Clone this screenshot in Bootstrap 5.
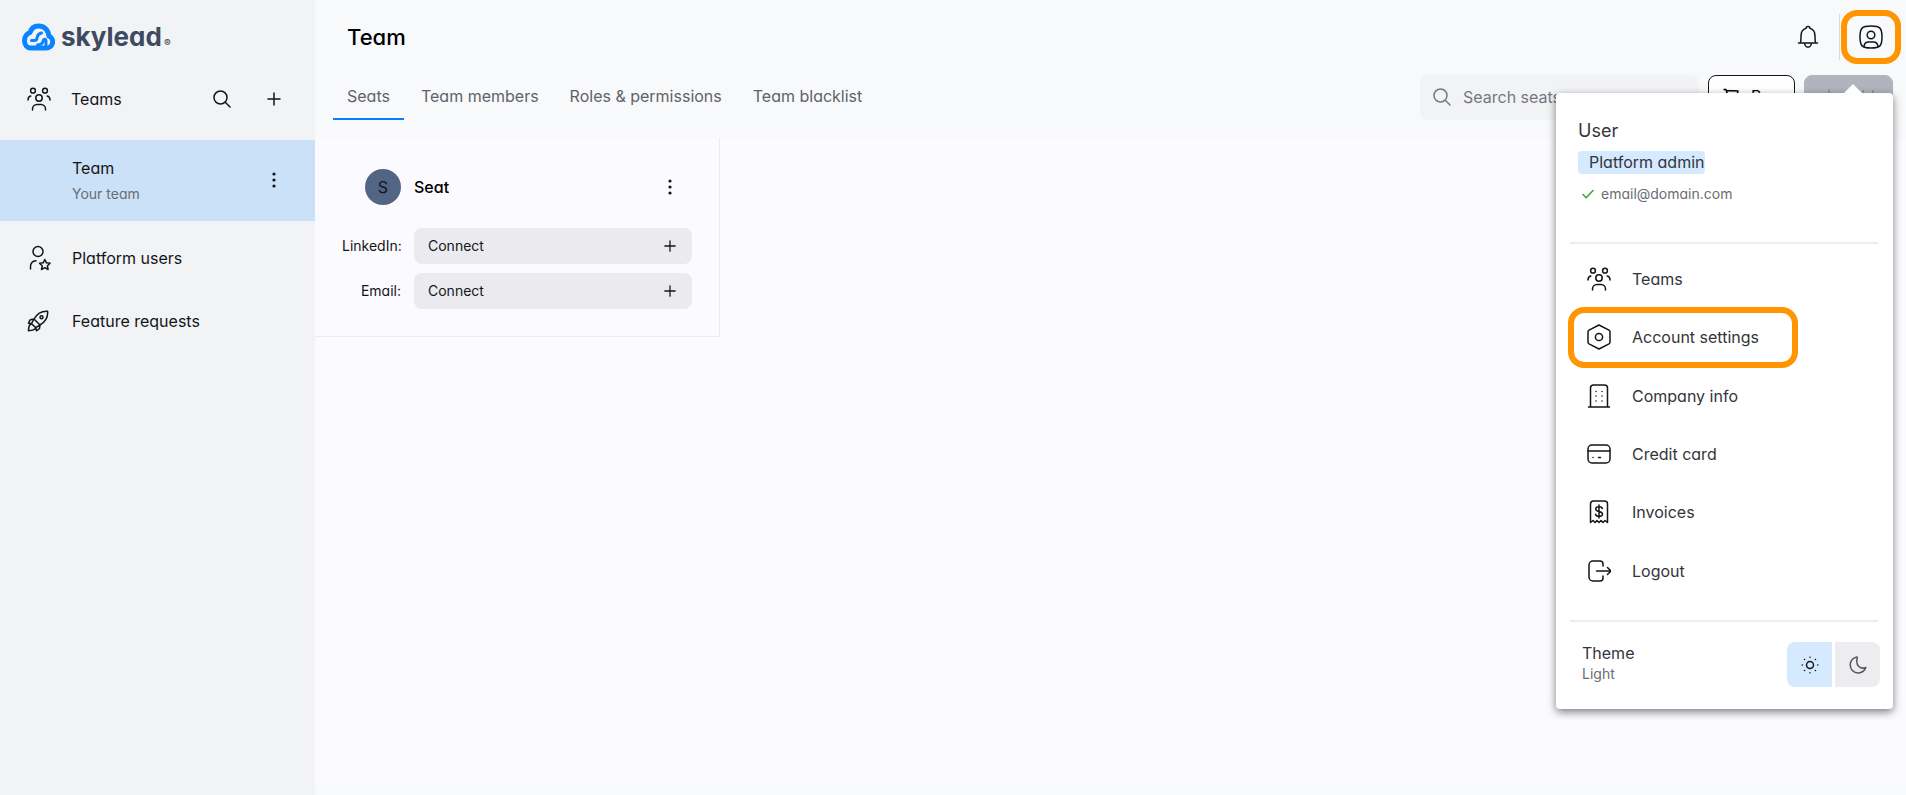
<!DOCTYPE html>
<html lang="en">
<head>
<meta charset="utf-8">
<meta name="viewport" content="width=device-width, initial-scale=1">
<title>Team – Seats</title>
<link href="https://cdn.jsdelivr.net/npm/bootstrap@5.3.0/dist/css/bootstrap.min.css" rel="stylesheet">
<style>
  body { font-family: Inter, "Liberation Sans", sans-serif; font-feature-settings: "cv11"; font-size: 16px; line-height: 24px; color: #14151a; background: #f8f9fb; }
  a { color: inherit; text-decoration: none; }
  svg { display: block; flex: none; fill: none; stroke: currentColor; stroke-width: 1.5; stroke-linecap: round; stroke-linejoin: round; }
  .btn-plain { border: 0; background: none; padding: 0; color: inherit; }
  .note { font-size: 14px; line-height: 20px; color: #6b6d73; }

  .sidebar { flex: 0 0 315px; background: #f2f3f5; }
  .brand { height: 68px; padding: 6px 0 0 22px; gap: 6px; color: #3e4a61; }
  .brand-word { font-size: 26px; font-weight: 700; line-height: 32px; }
  .brand-mark { font-size: 10px; line-height: 12px; font-weight: 600; margin-left: -4px; padding-top: 12px; }
  .brand svg { color: #0a84ff; stroke-width: 5; }
  .side-row { min-height: 63px; padding: 0 0 2px 23px; gap: 17px; }
  .side-icon { width: 32px; }
  .side-head { height: 72px; padding-bottom: 11px; padding-right: 30px; }
  .side-current { height: 81px; background: #cbe1f7; padding: 0 31px 2px 72px; margin-bottom: 6px; }
  .side-search { margin-right: 17px; padding: 0 15px; margin-right: 32px; }
  .side-head .side-search { padding: 0; margin-right: 17px; }
  .side-head .side-search + button { padding: 0 4px; margin-left: 15px; }

  .page-title { font-size: 22px; font-weight: 500; line-height: 28px; color: #000; margin: 0; }
  .topbar { height: 74px; padding-left: 32px; padding-right: 23px; }
  .topbar-line { width: 1px; height: 46px; background: #d9dade; margin: 0 19px 0 20px; }
  .toolbar { height: 64px; padding: 1px 13px 0 18px; }
  .tabs { gap: 3px; }
  .tab { height: 45px; padding: 9px 14px 0; color: #5f6368; border-bottom: 2px solid transparent; }
  .tab.current { border-color: #0082ff; }
  .search-box { width: 279px; height: 45px; background: #f2f3f5; border-radius: 8px; padding: 0 13px 2px; gap: 12px; color: #76787f; }
  .search-box input { border: 0; background: none; outline: 0; padding: 0; min-width: 0; color: inherit; }
  .search-box input::placeholder { color: #76787f; opacity: 1; }
  .btn-tool { height: 45px; border-radius: 8px; border: 1px solid #14151a; background: #fff; padding: 0 0 3px; margin-left: 9px; }
  .btn-buy { width: 87px; gap: 12px; }
  .btn-add { width: 89px; background: #b1b4bd; border-color: #b1b4bd; color: #8b8e99; }

  .board { background: #fbfaff; margin-bottom: 11px; }
  .seat { width: 405px; height: 199px; border: solid #ebebef; border-width: 0 1px 1px 0; padding: 31px 27px 0 27px; }
  .seat-head { margin-bottom: 23px; }
  .avatar { width: 36px; height: 36px; border-radius: 50%; background: #526585; margin-left: 23px; }
  .seat-name { font-weight: 500; color: #000; margin-left: 13px; }
  .seat-row { gap: 13px; margin-bottom: 9px; }
  .seat-label { width: 59px; font-size: 14px; line-height: 20px; }
  .btn-connect { height: 36px; border-radius: 8px; background: #ebebef; font-size: 14px; padding: 0 16px 0 14px; }

  .ring { position: relative; }
  .ring::after { content: ""; position: absolute; border: 6px solid #ff9500; border-radius: 16px; pointer-events: none; }
  .ring-user::after { inset: -15px -18px; }
  .ring-item::after { inset: -1px 82px -1px -2px; }

  .account { position: absolute; top: 93px; right: 13px; width: 337px; background: #fff; color: #33353a; border-radius: 4px; box-shadow: 0 3px 9px rgba(0,0,0,.5); padding: 25px 13px 22px 14px; }
  .account svg { color: #14151a; }
  .account::before { content: ""; position: absolute; top: -9px; right: 31px; border: solid transparent; border-width: 0 9px 9px; border-bottom-color: #fff; }
  .account-name { font-size: 18px; line-height: 26px; margin-left: 8px; }
  .role { background: #d5e9ff; border-radius: 4px; line-height: 22px; height: 23px; padding: 0 0 0 11px; margin: 7px 0 0 8px; }
  .account-mail { margin: 10px 0 38px 12px; gap: 7px; }
  .account .account-mail svg { color: #2fa62f; }
  .rule { height: 2px; background: #ededf0; margin-right: 2px; }
  .account-menu { height: 350px; margin: 6px 0 20px; }
  .account-menu a { flex: 1 1 0; gap: 21px; padding-left: 17px; }
  .theme-row { margin-top: 20px; }
  .theme-label { line-height: 22px; padding-left: 12px; }
  .theme-btn { width: 45px; height: 45px; background: #ededf0; }
  .theme-btn svg { color: #55565e; }
  .theme-btn.on { background: #d5e9ff; }
  .theme-btn.on svg { color: #14151a; }
  .theme-switch { gap: 3px; }
</style>
</head>
<body>
<svg width="0" height="0" class="position-absolute" aria-hidden="true">
  <symbol id="i-teams" viewBox="0 0 24 24"><circle cx="6" cy="3.700" r="2.400"/><circle cx="18" cy="3.700" r="2.400"/><circle cx="12" cy="11" r="3.200"/><path d="M5.500 23v-1a4.500 4.500 0 0 1 4.500-4.500h4a4.500 4.500 0 0 1 4.500 4.500v1M1 13c0-2 1-3.500 2.800-3.900M23 13c0-2-1-3.500-2.800-3.900"/></symbol>
  <symbol id="i-search" viewBox="0 0 18 18"><circle cx="7.500" cy="7.500" r="6.500"/><path d="M12.300 12.300L17 17"/></symbol>
  <symbol id="i-plus" viewBox="0 0 14 14"><path d="M7 1v12M1 7h12"/></symbol>
  <symbol id="i-dots" viewBox="0 0 4 16"><g fill="currentColor" stroke="none"><circle cx="2" cy="2" r="1.600"/><circle cx="2" cy="8" r="1.600"/><circle cx="2" cy="14" r="1.600"/></g></symbol>
</svg>

<div class="d-flex min-vh-100 position-relative">
  <aside class="sidebar">
    <a href="#" class="brand d-flex align-items-center" aria-label="skylead">
      <svg width="33" height="28" viewBox="0 0 33 28"><path d="M8.500 25H24a6.300 6.300 0 0 0 3-12C26 6.500 22 3 16.500 3c-4.500 0-7.300 2.500-8.500 6.500C4.500 11 2.500 13.500 2.500 17.500c0 4.500 2.600 7.500 6 7.500z"/><path stroke-width="3" d="M9.500 17.500H12c2 0 3-1.200 3.200-3.200.3-2.600 1.800-3.800 4.300-4.300"/><path stroke-width="3" d="M15.500 22c3.500 0 5.200-1.200 5.700-4.200.2-1.200 1-1.800 1.900-1.500.7.200.9.900.9 1.700v4"/></svg>
      <span class="brand-word">skylead</span><span class="brand-mark">®</span>
    </a>
    <div class="side-row side-head d-flex align-items-center gap-0">
      <a href="#" class="d-flex align-items-center gap-3 me-auto"><span class="side-icon"><svg width="24" height="24" class="ms-1"><use href="#i-teams"/></svg></span><span>Teams</span></a>
      <button class="btn-plain side-search" aria-label="Search teams"><svg width="18" height="18"><use href="#i-search"/></svg></button>
      <button class="btn-plain" aria-label="Add team"><svg width="14" height="14"><use href="#i-plus"/></svg></button>
    </div>
    <div class="side-current d-flex align-items-center justify-content-between">
      <a href="#">Team<span class="note d-block mt-1">Your team</span></a>
      <button class="btn-plain px-2" aria-label="Team options"><svg width="4" height="16"><use href="#i-dots"/></svg></button>
    </div>
    <a href="#" class="side-row d-flex align-items-center"><span class="side-icon"><svg width="24" height="26" viewBox="0 0 24 26" class="ms-1"><circle cx="11" cy="6.500" r="5"/><path d="M3.500 24v-2.500c0-3.500 2-5.500 5.500-5.800M17.800 14.500l1.600 3.300 3.700.5-2.700 2.500.7 3.700-3.300-1.800-3.300 1.800.7-3.700-2.700-2.500 3.700-.5z"/></svg></span>Platform users</a>
    <a href="#" class="side-row d-flex align-items-center"><span class="side-icon"><svg width="22" height="22" viewBox="0 0 22 22" class="ms-1"><path d="M7 9C9.500 4.500 13.500.8 20.600 1.200 21.200 7.500 18 12 13 15zM7 9l-3.800.8L1.500 13.200 4.500 13.700M13 15l-.5 3.500-3 2.300-.7-3.200M4.500 13.700c-2.500 1-3 4-3 7 3.500 0 6.300-.4 7.300-3.100zM4.500 13.700L7 9M8.800 17.600L13 15"/><circle cx="14.500" cy="7.200" r="1.500"/></svg></span>Feature requests</a>
  </aside>

  <main class="flex-fill d-flex flex-column">
    <header class="topbar d-flex align-items-center">
      <h1 class="page-title me-auto">Team</h1>
      <button class="btn-plain" aria-label="Notifications"><svg width="22" height="24" viewBox="0 0 22 24"><path d="M1.500 18h19M3.500 18c.5-2 .5-4 .5-7 0-4 2-6.800 5-7.600a2 2 0 0 1 4 0c3 .8 5 3.600 5 7.600 0 3 0 5 .5 7M7.700 18.300a3.300 4 0 0 0 6.600 0"/></svg></button>
      <span class="topbar-line"></span>
      <button class="btn-plain ring ring-user" aria-label="Account"><svg width="24" height="24" viewBox="0 0 24 24"><path d="M12 1c9 0 11 2 11 11s-2 11-11 11S1 21 1 12 3 1 12 1z"/><circle cx="12" cy="10" r="3.800"/><path d="M5 21.500c.3-3 1.800-4.500 4.500-4.500h5c2.700 0 4.200 1.500 4.500 4.500"/></svg></button>
    </header>
    <div class="toolbar d-flex">
      <nav class="tabs d-flex me-auto" aria-label="Team sections">
        <a href="#" class="tab current" aria-current="page">Seats</a>
        <a href="#" class="tab">Team members</a>
        <a href="#" class="tab">Roles &amp; permissions</a>
        <a href="#" class="tab">Team blacklist</a>
      </nav>
      <label class="search-box d-flex align-items-center"><svg width="18" height="18" stroke-width="1.200"><use href="#i-search"/></svg><input type="search" placeholder="Search seats" aria-label="Search seats"></label>
      <button class="btn-tool btn-buy d-flex align-items-center justify-content-center"><svg width="16" height="16" viewBox="0 0 16 16"><path d="M1 1.500h2L5.500 10.500h7.500l2-7.500L3.500 2.500"/><circle cx="6" cy="14" r="1"/><circle cx="12" cy="14" r="1"/></svg>Buy</button>
      <button class="btn-tool btn-add d-flex align-items-center justify-content-center gap-2" disabled><svg width="14" height="14"><use href="#i-plus"/></svg>Add</button>
    </div>
    <section class="board flex-fill">
      <article class="seat d-flex flex-column">
        <div class="seat-head d-flex align-items-center">
          <span class="avatar d-flex align-items-center justify-content-center">S</span>
          <span class="seat-name me-auto">Seat</span>
          <button class="btn-plain me-3 px-1" aria-label="Seat options"><svg width="4" height="16"><use href="#i-dots"/></svg></button>
        </div>
        <div class="seat-row d-flex align-items-center"><span class="seat-label text-end text-nowrap">LinkedIn:</span><button class="btn-plain btn-connect flex-fill d-flex align-items-center justify-content-between">Connect<svg width="12" height="12"><use href="#i-plus"/></svg></button></div>
        <div class="seat-row d-flex align-items-center"><span class="seat-label text-end">Email:</span><button class="btn-plain btn-connect flex-fill d-flex align-items-center justify-content-between">Connect<svg width="12" height="12"><use href="#i-plus"/></svg></button></div>
      </article>
    </section>
  </main>

  <div class="account">
    <div class="account-name">User</div>
    <div class="d-flex"><span class="role">Platform admin</span></div>
    <div class="account-mail note d-flex align-items-center"><svg width="12" height="10" viewBox="0 0 12 10"><path d="M1 5.500L4.200 8.700 11 1.500"/></svg>email@domain.com</div>
    <div class="rule"></div>
    <nav class="account-menu d-flex flex-column" aria-label="Account">
      <a href="#" class="d-flex align-items-center"><svg width="24" height="24"><use href="#i-teams"/></svg>Teams</a>
      <a href="#" class="d-flex align-items-center ring ring-item"><svg width="24" height="26" viewBox="0 0 24 26"><path d="M12 1l10 5.200q1 .6 1 1.800v10q0 1.200-1 1.800L12 25 2 19.800q-1-.6-1-1.800V8q0-1.200 1-1.800z"/><circle cx="12" cy="13" r="3.600"/></svg>Account settings</a>
      <a href="#" class="d-flex align-items-center"><svg width="24" height="24" viewBox="0 0 24 24"><path d="M1.500 23h21M3.500 23V4a3 3 0 0 1 3-3h11a3 3 0 0 1 3 3v19M9 7.500h.01M15 7.500h.01M9 12h.01M15 12h.01M9 17h.01M15 17h.01"/></svg>Company info</a>
      <a href="#" class="d-flex align-items-center"><svg width="24" height="20" viewBox="0 0 24 20"><rect x="1" y="1" width="22" height="18" rx="4"/><path d="M1 7h22M6 13.500h.01M11.500 13.500h2"/></svg>Credit card</a>
      <a href="#" class="d-flex align-items-center"><svg width="24" height="24" viewBox="0 0 24 24"><path d="M3.500 22.500V4a3 3 0 0 1 3-3h11a3 3 0 0 1 3 3v18.500l-2.500-2-2 2-2-2-2 2-2-2-2 2-2-2zM12 5v13M15.300 8.500C15 7.200 13.800 6.800 12 6.800c-2 0-3.300.8-3.300 2.200 0 3.400 6.800 1.600 6.800 5 0 1.500-1.500 2.400-3.500 2.400-1.900 0-3.300-.7-3.500-2.200"/></svg>Invoices</a>
      <a href="#" class="d-flex align-items-center"><svg width="24" height="22" viewBox="0 0 24 22"><path d="M16 6V4a3 3 0 0 0-3-3H6a4 4 0 0 0-4 4v12a4 4 0 0 0 4 4h7a3 3 0 0 0 3-3v-2M9.500 11H24M20.500 7.500L24 11l-3.500 3.500"/></svg>Logout</a>
    </nav>
    <div class="rule"></div>
    <div class="theme-row d-flex justify-content-between">
      <div class="theme-label">Theme<div class="note">Light</div></div>
      <div class="theme-switch d-flex">
        <button class="btn-plain theme-btn on rounded-start-3 d-flex align-items-center justify-content-center" aria-label="Light theme"><svg width="18" height="18" viewBox="0 0 18 18" stroke-width="1.700"><circle cx="9" cy="9" r="3.500"/><path d="M9 1.200v.1M9 16.700v.1M1.200 9h.1M16.700 9h.1M3.500 3.500h.1M14.400 3.500h.1M3.500 14.400h.1M14.400 14.400h.1"/></svg></button>
        <button class="btn-plain theme-btn rounded-end-3 d-flex align-items-center justify-content-center" aria-label="Dark theme"><svg width="18" height="18" viewBox="0 0 18 18"><path d="M7 1.200a8 8 0 1 0 9.800 10.300C12 13.500 6 10 8.300 1.500 8.400 1 7.800 1 7 1.200z"/></svg></button>
      </div>
    </div>
  </div>
</div>
<script src="https://cdn.jsdelivr.net/npm/bootstrap@5.3.0/dist/js/bootstrap.bundle.min.js"></script>
</body>
</html>
